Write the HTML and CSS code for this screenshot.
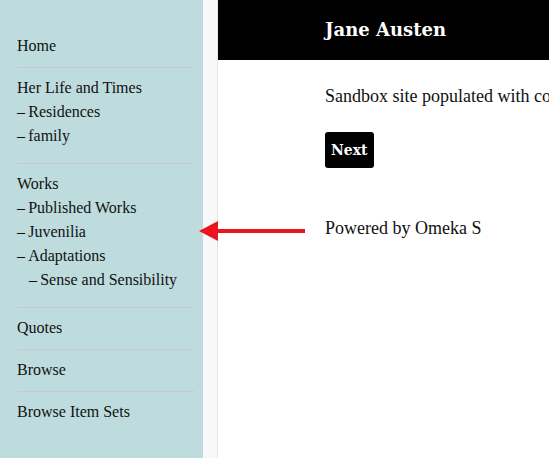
FILE: index.html
```html
<!DOCTYPE html>
<html lang="en">
<head>
<meta charset="utf-8">
<title>Jane Austen</title>
<link rel="stylesheet" href="styles.css">
</head>
<body>
<aside class="sidebar">
  <ul class="nav">
    <li class="nav-item">Home</li>
    <li class="nav-item">Her Life and Times
      <ul class="sub">
        <li>Residences</li>
        <li>family</li>
      </ul>
    </li>
    <li class="nav-item">Works
      <ul class="sub">
        <li>Published Works</li>
        <li>Juvenilia</li>
        <li>Adaptations
          <ul class="sub sub-deep">
            <li>Sense and Sensibility</li>
          </ul>
        </li>
      </ul>
    </li>
    <li class="nav-item">Quotes</li>
    <li class="nav-item">Browse</li>
    <li class="nav-item last">Browse Item Sets</li>
  </ul>
</aside>
<div class="strip"></div>
<main class="main">
  <header class="site-header"><h1 class="site-title">Jane Austen</h1></header>
  <div class="content">
    <p class="intro">Sandbox site populated with content about Jane Austen.</p>
    <a class="btn">Next</a>
    <p class="powered">Powered by Omeka S</p>
  </div>
</main>
<svg class="arrow" width="112" height="24" viewBox="0 0 112 24">
  <polygon points="2,11 21,1 21,21" fill="#ea1520"/>
  <rect x="20" y="9" width="88" height="4" fill="#ea1520"/>
</svg>
</body>
</html>
```

FILE: styles.css
```css
html, body {
  margin: 0;
  padding: 0;
}
body {
  display: flex;
  min-height: 458px;
  font-family: "Liberation Serif", "DejaVu Serif", serif;
  font-size: 16px;
  line-height: 24px;
  color: #111;
  background: #fff;
  overflow: hidden;
}
.sidebar {
  width: 203px;
  flex: none;
  background: #bedcdd;
  padding: 26px 9px 0 17px;
  box-sizing: border-box;
}
.nav, .sub {
  list-style: none;
  margin: 0;
  padding: 0;
}
.nav-item {
  padding: 8px 0 9px;
  border-bottom: 1px solid #cbc7cb;
}
.nav-item.last {
  border-bottom: none;
}
.nav-item > .sub {
  margin-bottom: 6px;
}
.sub li::before {
  content: "\2013\2009";
}
.sub-deep {
  padding-left: 12px;
}
.strip {
  width: 14px;
  flex: none;
  background: #f8f8f8;
  border-right: 1px solid #e6e6e6;
}
.main {
  flex: 1;
  min-width: 0;
  overflow: hidden;
}
.site-header {
  height: 60px;
  background: #000;
  padding-left: 107px;
  display: flex;
  align-items: center;
}
.site-title {
  margin: 0;
  color: #fff;
  font-family: "DejaVu Serif", serif;
  font-weight: bold;
  font-size: 18px;
  line-height: 24px;
  white-space: nowrap;
}
.content {
  padding-left: 107px;
  white-space: nowrap;
  font-size: 18px;
}
.intro {
  margin: 24px 0 24px;
}
.btn {
  display: inline-flex;
  align-items: center;
  height: 36px;
  padding: 0 6px;
  background: #000;
  color: #fff;
  border-radius: 3px;
  font-family: "DejaVu Serif", serif;
  font-weight: bold;
  font-size: 14px;
  vertical-align: top;
}
.powered {
  margin: 48px 0 0;
}
.arrow {
  position: absolute;
  left: 197px;
  top: 220px;
}
```
